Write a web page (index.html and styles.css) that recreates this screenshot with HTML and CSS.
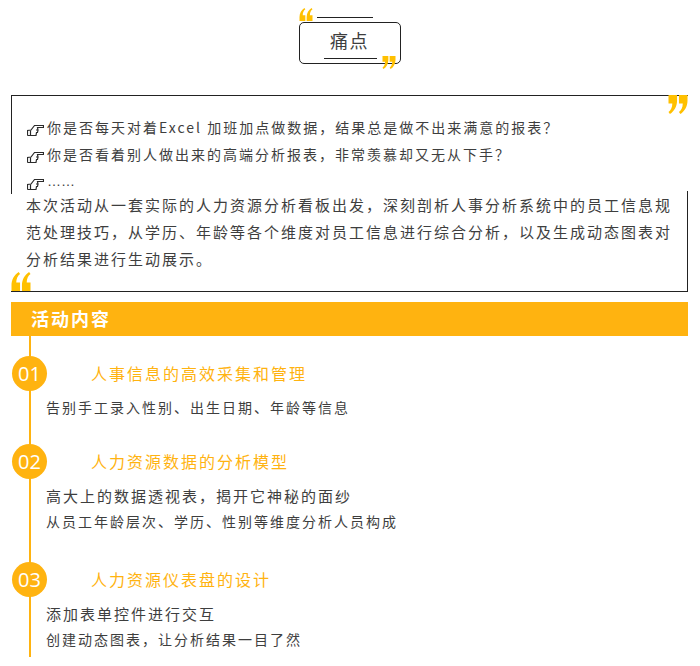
FILE: index.html
```html
<!DOCTYPE html>
<html lang="zh">
<head>
<meta charset="utf-8">
<title>痛点</title>
<link rel="stylesheet" href="styles.css">
</head>
<body>
<svg width="0" height="0" class="defs">
  <defs>
    <symbol id="q-open" viewBox="0 0 20 20">
      <path d="M7.500 0C3 3 0 8 0 14v6h9v-9H5C5 7 6.500 4 9 2zM18.500 0C14 3 11 8 11 14v6h9v-9h-4c0-4 1.500-7 4-9z"/>
    </symbol>
    <symbol id="q-close" viewBox="0 0 20 20">
      <path d="M12.500 20C17 17 20 12 20 6V0h-9v9h4c0 4-1.500 7-4 9zM1.500 20C6 17 9 12 9 6V0H0v9h4c0 4-1.500 7-4 9z"/>
    </symbol>
    <symbol id="hand-icon" viewBox="0 0 17 12">
      <path d="M.5 11.500V6.500L4 6 7.500 1.500H16.500V3.500H10.500L11 6H9M11 6 10.500 8.500H9.500L9 11.500H.5M3.500 6.500V11.500"/>
    </symbol>
  </defs>
</svg>
<main class="page">
  <section class="title-wrap">
    <div class="title-box">
      <svg class="quote title-q-open"><use href="#q-open"/></svg>
      <span class="title-rule rule-top"></span>
      <h1 class="title">痛点</h1>
      <span class="title-rule rule-bottom"></span>
      <svg class="quote title-q-close"><use href="#q-close"/></svg>
    </div>
  </section>

  <section class="pain">
    <svg class="quote pain-q-close"><use href="#q-close"/></svg>
    <div class="pain-top">
      <p class="pain-line"><svg class="hand"><use href="#hand-icon"/></svg>你是否每天对着Excel 加班加点做数据，结果总是做不出来满意的报表？</p>
      <p class="pain-line"><svg class="hand"><use href="#hand-icon"/></svg>你是否看着别人做出来的高端分析报表，非常羡慕却又无从下手？</p>
      <p class="pain-line"><svg class="hand"><use href="#hand-icon"/></svg><span class="dots">……</span></p>
    </div>
    <div class="pain-bottom">
      <p class="pain-text">本次活动从一套实际的人力资源分析看板出发，深刻剖析人事分析系统中的员工信息规范处理技巧，从学历、年龄等各个维度对员工信息进行综合分析，以及生成动态图表对分析结果进行生动展示。</p>
    </div>
    <svg class="quote pain-q-open"><use href="#q-open"/></svg>
  </section>

  <h2 class="banner">活动内容</h2>

  <section class="timeline">
    <article class="item item-1">
      <div class="item-head"><span class="num">01</span><h3 class="item-title">人事信息的高效采集和管理</h3></div>
      <p class="item-text">告别手工录入性别、出生日期、年龄等信息</p>
    </article>
    <article class="item item-2">
      <div class="item-head head-roomy"><span class="num">02</span><h3 class="item-title">人力资源数据的分析模型</h3></div>
      <p class="item-text big">高大上的数据透视表，揭开它神秘的面纱</p>
      <p class="item-text">从员工年龄层次、学历、性别等维度分析人员构成</p>
    </article>
    <article class="item item-3">
      <div class="item-head head-roomy"><span class="num">03</span><h3 class="item-title">人力资源仪表盘的设计</h3></div>
      <p class="item-text big">添加表单控件进行交互</p>
      <p class="item-text">创建动态图表，让分析结果一目了然</p>
    </article>
  </section>
</main>
</body>
</html>
```
FILE: styles.css
```css
* { box-sizing: border-box; }
html, body { margin: 0; padding: 0; background: #fff; }
body {
  font-family: "Noto Sans CJK SC", "Liberation Sans", sans-serif;
  color: #3e3e3e;
}
.defs { position: absolute; }
p, h1, h2, h3 { margin: 0; font-weight: normal; }
.page { margin-left: 11px; width: 677px; padding-top: 22px; }

.quote { position: absolute; fill: #ffc000; }

.title-wrap { display: flex; justify-content: center; padding-bottom: 31px; }
.title-box {
  position: relative;
  width: 102px;
  height: 42px;
  border: 1px solid #222;
  border-radius: 5px;
  display: flex;
  align-items: flex-start;
  justify-content: center;
  background: #fff;
}
.title { font-size: 18px; letter-spacing: 1.5px; line-height: 34px; color: #3e3e3e; }
.title-rule { position: absolute; height: 1px; background: #222; }
.rule-top { left: 17px; width: 56px; top: -6px; }
.rule-bottom { left: 24px; width: 53px; top: 35px; }
.title-q-open { left: -1px; top: -15px; width: 14px; height: 13px; }
.title-q-close { left: 82px; top: 33px; width: 14px; height: 13px; }

.pain { position: relative; }
.pain-top {
  border-top: 1px solid #222;
  border-left: 1px solid #222;
  height: 99px;
  padding: 18px 0 0 15px;
}
.pain-line {
  font-size: 14px;
  letter-spacing: 2px;
  line-height: 27px;
  height: 27px;
  white-space: nowrap;
  display: flex;
  align-items: center;
}
.hand {
  width: 17px;
  height: 12px;
  flex: none;
  margin: 4px 3px 0 0;
  fill: none;
  stroke: #2a2a2a;
  stroke-width: 1.2;
}
.dots { font-family: "Liberation Sans", sans-serif; letter-spacing: 0; font-size: 14px; }
.pain-bottom {
  border-right: 1px solid #222;
  border-bottom: 1px solid #222;
  margin-top: -3px;
  height: 101px;
  padding: 0 0 0 15px;
}
.pain-text {
  font-size: 15px;
  letter-spacing: 2px;
  line-height: 27px;
  width: 652px;
}
.pain-q-close { right: 0; top: 0; width: 20px; height: 19px; }
.pain-q-open { left: 0; top: 177px; width: 20px; height: 19px; }

.banner {
  margin-top: 10px;
  height: 34px;
  background: #ffb310;
  color: #fff;
  font-size: 18px;
  font-weight: bold;
  letter-spacing: 2px;
  line-height: 33px;
  padding-left: 20px;
}

.timeline {
  margin-left: 18px;
  border-left: 2px solid #ffb310;
  height: 321px;
  padding-top: 20px;
}
.item { margin-left: -19px; }
.item-2 { margin-top: 25px; }
.item-3 { margin-top: 29px; }
.item-head { display: flex; align-items: center; height: 35px; margin-bottom: 4px; }
.head-roomy { margin-bottom: 5px; }
.num {
  width: 35px;
  height: 35px;
  flex: none;
  border-radius: 50%;
  background: #ffb310;
  color: #fff;
  font-family: "Open Sans", "Liberation Sans", sans-serif;
  font-size: 20px;
  line-height: 35px;
  text-align: center;
}
.item-title {
  margin-left: 44px;
  font-size: 16px;
  letter-spacing: 2px;
  color: #ffb310;
  line-height: 33px;
}
.item-text {
  margin-left: 34px;
  font-size: 14px;
  letter-spacing: 2px;
  line-height: 24px;
  white-space: nowrap;
}
.item-text.big { font-size: 15px; margin-bottom: 1px; }
```
